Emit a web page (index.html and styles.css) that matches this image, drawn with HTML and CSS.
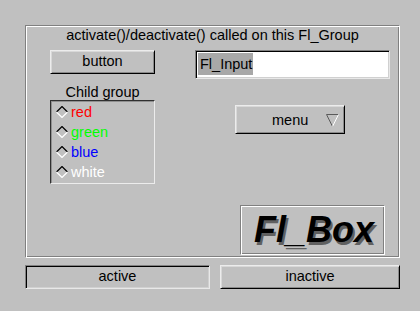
FILE: index.html
```html
<!DOCTYPE html>
<html>
<head>
<meta charset="utf-8">
<link rel="stylesheet" href="styles.css">
</head>
<body>
<div class="window">
  <div class="group">
    <div class="group-label">activate()/deactivate() called on this Fl_Group</div>
    <div class="content">
      <div class="left">
        <div class="btn up">button</div>
        <div class="child-label">Child group</div>
        <div class="child-box">
          <div class="radio red"><svg class="dia" width="12" height="12" viewBox="0 0 12 12"><polygon points="6,1 11,6 6,11 1,6" fill="#c0c0c0"/><polyline points="0.5,6 6,0.5 11.5,6" fill="none" stroke="#000" stroke-width="1.2"/><polyline points="0.5,6 6,11.5 11.5,6" fill="none" stroke="#fff" stroke-width="1.2"/></svg><span>red</span></div>
          <div class="radio green"><svg class="dia" width="12" height="12" viewBox="0 0 12 12"><polygon points="6,1 11,6 6,11 1,6" fill="#c0c0c0"/><polyline points="0.5,6 6,0.5 11.5,6" fill="none" stroke="#000" stroke-width="1.2"/><polyline points="0.5,6 6,11.5 11.5,6" fill="none" stroke="#fff" stroke-width="1.2"/></svg><span>green</span></div>
          <div class="radio blue"><svg class="dia" width="12" height="12" viewBox="0 0 12 12"><polygon points="6,1 11,6 6,11 1,6" fill="#c0c0c0"/><polyline points="0.5,6 6,0.5 11.5,6" fill="none" stroke="#000" stroke-width="1.2"/><polyline points="0.5,6 6,11.5 11.5,6" fill="none" stroke="#fff" stroke-width="1.2"/></svg><span>blue</span></div>
          <div class="radio white"><svg class="dia" width="12" height="12" viewBox="0 0 12 12"><polygon points="6,1 11,6 6,11 1,6" fill="#c0c0c0"/><polyline points="0.5,6 6,0.5 11.5,6" fill="none" stroke="#000" stroke-width="1.2"/><polyline points="0.5,6 6,11.5 11.5,6" fill="none" stroke="#fff" stroke-width="1.2"/></svg><span>white</span></div>
        </div>
      </div>
      <div class="right">
        <div class="input"><span class="sel">Fl_Input</span></div>
        <div class="menu up"><span class="menu-text">menu</span><svg class="tri" width="13" height="13" viewBox="0 0 13 13"><polyline points="6.5,12.5 0.5,0.5 12.5,0.5" fill="none" stroke="#5a5a5a" stroke-width="1"/><line x1="12.5" y1="0.5" x2="6.5" y2="12.5" stroke="#fff" stroke-width="1"/></svg></div>
        <div class="flbox"><span>Fl_Box</span></div>
      </div>
    </div>
  </div>
  <div class="bottom">
    <div class="btn down wide1">active</div>
    <div class="btn up wide2">inactive</div>
  </div>
</div>
</body>
</html>
```
FILE: styles.css
```css
html, body {
  margin: 0;
  padding: 0;
  background: #c0c0c0;
}
body {
  width: 420px;
  height: 311px;
  overflow: hidden;
  font-family: "Liberation Sans", Arial, sans-serif;
  font-size: 14.5px;
  color: #000;
}
.window {
  padding: 25px 0 0 25px;
}
.group {
  box-sizing: border-box;
  width: 375px;
  height: 233px;
  border: 1px solid;
  border-color: #808080 #ffffff #ffffff #808080;
  box-shadow: inset 1px 1px 0 #ffffff, inset -1px -1px 0 #808080;
}
.group-label {
  height: 24px;
  line-height: 18px;
  text-align: center;
}
.content {
  display: flex;
  padding-left: 24px;
  gap: 40px;
}
.left {
  width: 105px;
  display: flex;
  flex-direction: column;
}
.right {
  width: 195px;
  display: flex;
  flex-direction: column;
}
.btn {
  box-sizing: border-box;
  height: 24px;
  line-height: 20px;
  text-align: center;
}
.up {
  border: 1px solid;
  border-color: #ececec #000000 #000000 #ececec;
  box-shadow: inset 1px 1px 0 #d8d8d8, inset -1px -1px 0 #8a8a8a;
}
.down {
  border: 1px solid;
  border-color: #808080 #e8e8e8 #e8e8e8 #808080;
  box-shadow: inset 1px 1px 0 #000000, inset -1px -1px 0 #d0d0d0;
}
.child-label {
  height: 26px;
  box-sizing: border-box;
  padding-top: 10px;
  line-height: 16px;
  text-align: center;
}
.child-box {
  box-sizing: border-box;
  height: 84px;
  border: 1px solid;
  border-color: #303030 #ececec #ececec #303030;
  box-shadow: inset 1px 1px 0 #909090;
  padding-top: 1px;
}
.radio {
  height: 20px;
  display: flex;
  align-items: center;
  padding-left: 5px;
}
.dia {
  flex: none;
  margin-right: 3px;
}
.red { color: #ff0000; }
.green { color: #00ff00; }
.blue { color: #0000ff; }
.white { color: #ffffff; }
.input {
  box-sizing: border-box;
  height: 29px;
  background: #ffffff;
  border: 1px solid;
  border-color: #808080 #e8e8e8 #e8e8e8 #808080;
  box-shadow: inset 1px 1px 0 #000000, inset -1px -1px 0 #d0d0d0;
  padding: 2px 0 0 2px;
}
.sel {
  display: inline-block;
  background: #a8a8a8;
  line-height: 22px;
  padding: 0 1px 0 2px;
}
.menu {
  box-sizing: border-box;
  margin: 26px 0 0 40px;
  width: 110px;
  height: 29px;
  display: flex;
  align-items: center;
}
.menu-text {
  margin-left: 36px;
  width: 54px;
}
.tri {
  margin-top: 2px;
}
.flbox {
  box-sizing: border-box;
  margin: 71px 0 0 45px;
  width: 145px;
  height: 50px;
  border: 1px solid;
  border-color: #808080 #ffffff #ffffff #808080;
  box-shadow: inset 1px 1px 0 #ffffff, inset -1px -1px 0 #808080;
  display: flex;
  align-items: center;
  justify-content: center;
  padding-left: 3px;
  font-size: 36px;
  font-weight: bold;
  font-style: italic;
  text-shadow: 2px 3px 0 #606060;
  line-height: 40px;
}
.bottom {
  display: flex;
  gap: 10px;
  margin-top: 7px;
}
.wide1 { width: 185px; }
.wide2 { width: 180px; }
```
